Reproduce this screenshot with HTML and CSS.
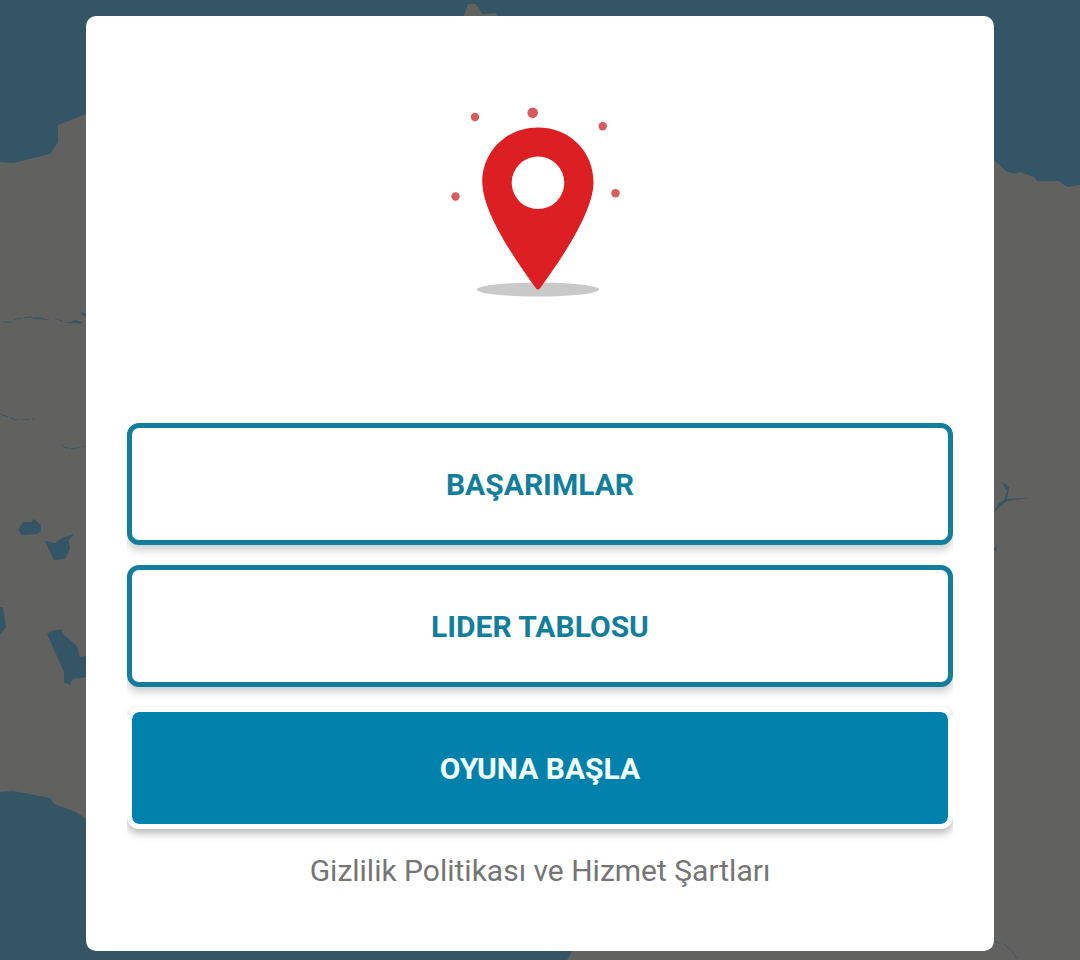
FILE: index.html
```html
<!DOCTYPE html>
<html lang="tr">
<head>
<meta charset="utf-8">
<meta name="viewport" content="width=device-width, initial-scale=1">
<title>Oyuna Başla</title>
<link rel="stylesheet" href="styles.css">
</head>
<body>
<svg class="map" viewBox="0 0 1080 960" preserveAspectRatio="xMidYMid slice" aria-hidden="true">
  <rect class="land" width="1080" height="960"/>
  <g class="water">
    <path d="M0 0H1080V185L1067 187L1059 181H1037L1034 177L1020 172L1014 174L1006 171L994 160V114H86L81 116L58 125V142L50 154L13 163L0 162Z"/>
    <path d="M0 792L13 791L50 798L54 804L76 812L86 819L120 830H560L572 951L567 960H0Z"/>
    <path d="M18 530L23 522L31 522L34 519L41 525V531L38 534L22 535Z"/>
    <path d="M45 541L55 543L64 537L74 534L69 540L70 549L65 559L54 560Z"/>
    <path d="M0 607H3L6 627L0 635Z"/>
    <path d="M47 634L52 631L61 629L63 634L77 646L80 657L86 656V677L73 679L70 685L64 683V672Z"/>
    <path d="M31 319L37 317L50 320L37 319ZM71 322L74 320L82 322L80 324ZM81 312L86 314V316L82 315ZM994 548L997 547L996 551H994Z"/>
    <path d="M1001 481L1009 487L1007 499L1030 498L1007 501L994 512L999 503L1004 500L1007 491Z"/>
  </g>
  <g class="river">
    <path d="M3 322H12L16 319L30 317L44 319M55 318L64 322L75 323M0 414L16 420L35 419M62 444L63 447L73 449L86 446M994 941L1001 944M1004 944L1012 951L1018 960"/>
  </g>
  <path class="land" d="M464 15L468 4H475L479 8L482 14L496 13L498 17H464Z"/>
</svg>
<main class="card">
  <svg class="pin" viewBox="440 96 200 210" role="img" aria-label="Konum">
    <ellipse class="shadow" cx="538" cy="289.500" rx="61" ry="7"/>
    <path class="marker" fill-rule="evenodd" d="M538 127.500C506 127.500 482.300 152 482.300 182C482.300 211 512 255 535 287Q538 292 541 287C564 255 593.500 211 593.500 182C593.500 152 570 127.500 538 127.500ZM538 156.500A26.300 26.300 0 1 1 538 209.100A26.300 26.300 0 1 1 538 156.500Z"/>
    <g class="dots">
      <circle cx="475" cy="117" r="4.200"/>
      <circle cx="532.700" cy="112.700" r="5.300"/>
      <circle cx="602.700" cy="126.200" r="4.200"/>
      <circle cx="455.500" cy="196.500" r="4.200"/>
      <circle cx="615.500" cy="193.300" r="4.200"/>
    </g>
  </svg>
  <div class="actions">
    <button class="button" type="button">BAŞARIMLAR</button>
    <button class="button" type="button">LIDER TABLOSU</button>
    <button class="button button-primary" type="button">OYUNA BAŞLA</button>
  </div>
  <a class="legal" href="#">Gizlilik Politikası ve Hizmet Şartları</a>
</main>
</body>
</html>
```
FILE: styles.css
```css
* {
  box-sizing: border-box;
}

body {
  margin: 0;
  min-height: 100vh;
  padding: 16px 86px 9px;
  display: flex;
  flex-direction: column;
  justify-content: center;
  background: #61615f;
  font-family: Roboto, "Noto Sans", sans-serif;
}

.map {
  position: fixed;
  inset: 0;
  z-index: -1;
  width: 100%;
  height: 100%;
}

.land {
  fill: #61615f;
}

.water {
  fill: #345566;
}

.river {
  fill: none;
  stroke: #3d5764;
  stroke-dasharray: 9 2;
}

.card {
  display: flex;
  flex-direction: column;
  align-items: center;
  padding: 80px 41px 61px;
  border-radius: 10px;
  background: #fff;
}

.pin {
  width: 200px;
  height: 210px;
}

.shadow {
  fill: #c9c9c9;
}

.marker {
  fill: #dc1f22;
}

.dots {
  fill: #d65c5f;
}

.actions {
  align-self: stretch;
  display: grid;
  gap: 20px;
  margin-top: 117px;
}

.button {
  height: 122px;
  padding: 2px 6px 0;
  border: 5px solid #137d9c;
  border-radius: 12px;
  background: #fff;
  color: #137d9c;
  font: bold 30px/36px Roboto, "Noto Sans", sans-serif;
  box-shadow: 0 5px 8px rgba(0, 0, 0, 0.2);
  clip-path: inset(0 0 -16px);
  cursor: pointer;
}

.button-primary {
  border-color: #fff;
  background: #0081ab;
  background-clip: padding-box;
  color: #f2ffff;
  box-shadow: 0 4px 8px rgba(0, 0, 0, 0.3);
  clip-path: inset(-1px 0 -16px);
}

.legal {
  margin-top: 23px;
  color: #757575;
  font-size: 30px;
  line-height: 38px;
  text-decoration: none;
}
```
